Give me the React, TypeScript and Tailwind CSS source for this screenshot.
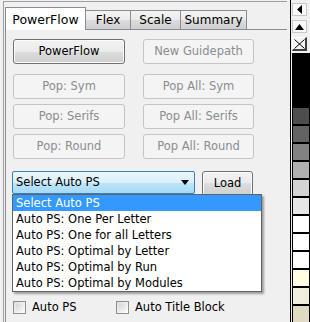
import React from "react";

const swatches = [
  "#4d4d4d",
  "#636363",
  "#828282",
  "#b0b0b0",
  "#d4d4d4",
  "#e6e6e6",
  "#ffffff",
  "#ffffff",
  "#ffffff",
  "#fffee2",
  "#f0eedc",
  "#e0dac2",
];

const items = [
  "Select Auto PS",
  "Auto PS: One Per Letter",
  "Auto PS: One for all Letters",
  "Auto PS: Optimal by Letter",
  "Auto PS: Optimal by Run",
  "Auto PS: Optimal by Modules",
];

const WinButton = ({
  label,
  disabled,
  className = "",
}: {
  label: string;
  disabled?: boolean;
  className?: string;
}) => {
  if (disabled) {
    return (
      <div
        className={`h-[25px] flex items-center justify-center rounded-[3px] border border-[#c2c5c8] bg-[#f4f4f4] text-[#8a8d92] ${className}`}
      >
        {label}
      </div>
    );
  }
  return (
    <div
      className={`h-[25px] flex items-center justify-center rounded-[3px] border border-[#707070] bg-[linear-gradient(#f2f2f2,#ebebeb_50%,#dddddd_50%,#cfcfcf)] shadow-[inset_0_0_0_1px_#fcfcfc] text-black ${className}`}
    >
      {label}
    </div>
  );
};

const Tab = ({
  label,
  active,
  className = "",
}: {
  label: string;
  active?: boolean;
  className?: string;
}) =>
  active ? (
    <div
      className={`h-[23px] pt-[2px] border border-b-0 border-[#898c95] bg-white text-[12.5px] text-black text-center -mb-px relative z-10 leading-[20px] ${className}`}
    >
      {label}
    </div>
  ) : (
    <div
      className={`h-[19px] border border-b-0 border-l-0 border-[#898c95] bg-[linear-gradient(#f3f3f3,#ebebeb_50%,#dddddd_50%,#cfcfcf)] text-[12px] text-black text-center leading-[18px] ${className}`}
    >
      {label}
    </div>
  );

const Checkbox = ({ label }: { label: string }) => (
  <div className="flex items-center gap-[6px]">
    <div className="w-[13px] h-[13px] border border-[#8e8f8f] bg-[linear-gradient(135deg,#dcdcdc,#ffffff)] p-[2px]">
      <div className="w-full h-full bg-[linear-gradient(135deg,#d8d8d8,#f4f4f4)]" />
    </div>
    <span>{label}</span>
  </div>
);

export default function App() {
  return (
    <div className="w-[310px] h-[322px] flex bg-[#f0f0f0] overflow-hidden font-['DejaVu_Sans',sans-serif] text-[11.5px] text-black">
      <div className="w-[290px] pl-[3px] pt-px">
        <div className="w-[284px] h-[321px] border-t border-l border-[#a0a0a0] pl-px pt-[4px] flex flex-col">
          <div className="flex items-end h-[23px]">
            <Tab label="PowerFlow" active className="w-[81px]" />
            <Tab label="Flex" className="w-[45px]" />
            <Tab label="Scale" className="w-[50px]" />
            <Tab label="Summary" className="w-[66px]" />
          </div>
          <div className="flex-1 border-t border-l border-[#898c95] relative pl-[7px] pt-[9px]">
            <div className="grid grid-cols-[112px_111px] gap-x-[18px]">
              <WinButton label="PowerFlow" />
              <WinButton label="New Guidepath" disabled />
            </div>
            <div className="grid grid-cols-[112px_111px] gap-x-[18px] gap-y-[5px] mt-[10px]">
              <WinButton label="Pop: Sym" disabled />
              <WinButton label="Pop All: Sym" disabled />
              <WinButton label="Pop: Serifs" disabled />
              <WinButton label="Pop All: Serifs" disabled />
              <WinButton label="Pop: Round" disabled />
              <WinButton label="Pop All: Round" disabled />
            </div>
            <div className="flex mt-[12px] -ml-px gap-[7px]">
              <div className="w-[183px] h-[23px] rounded-[2px] border border-[#3c7fb1] bg-[linear-gradient(#eaf6fd,#d9f0fc_50%,#bee6fd_50%,#a7d9f5)] flex items-center justify-between pl-[3px] pr-[5px]">
                <span>Select Auto PS</span>
                <svg width="8" height="5" viewBox="0 0 8 5">
                  <path d="M0 0h8L4 5z" fill="#000" />
                </svg>
              </div>
              <WinButton label="Load" className="w-[51px] h-[23px]" />
            </div>
            <div className="flex mt-[103px]">
              <div className="w-[103px]">
                <Checkbox label="Auto PS" />
              </div>
              <Checkbox label="Auto Title Block" />
            </div>
            <div className="absolute left-[6px] top-[164px] w-[250px] border border-[#646464] bg-white shadow-[2px_2px_2px_rgba(0,0,0,0.35)]">
              {items.map((it, i) => (
                <div
                  key={it}
                  className={`h-[16px] leading-[16px] pl-[3px] ${
                    i === 0 ? "bg-[#3399ff] text-white" : "text-black"
                  }`}
                >
                  {it}
                </div>
              ))}
            </div>
          </div>
        </div>
      </div>
      <div className="w-px bg-black" />
      <div className="w-px bg-[#f0f0f0]" />
      <div className="w-[18px] flex flex-col">
        <div className="h-[56px] flex flex-col pt-[3px] gap-[4px] pr-[3px]">
          <div className="h-[13px] border border-[#c8c8c8] bg-[#f8f8f8] flex items-center justify-center">
            <svg width="5" height="9" viewBox="0 0 5 9">
              <path d="M5 0v9L0 4.5z" fill="#000" />
            </svg>
          </div>
          <div className="h-[13px] border border-[#c8c8c8] bg-[#f8f8f8] flex items-center justify-center">
            <svg width="9" height="6" viewBox="0 0 9 6">
              <path d="M0 6h9L4.5 0z" fill="#000" />
            </svg>
          </div>
          <div className="h-[14px] border-t border-l border-white border-r-2 border-b-2 border-r-[#404040] border-b-[#404040] bg-[#f4f4f4] flex items-center justify-center">
            <svg width="11" height="10" viewBox="0 0 11 10">
              <path d="M0.5 0.5l10 9M10.5 0.5l-10 9" stroke="#000" strokeWidth="1" />
            </svg>
          </div>
        </div>
        <div className="flex-1 bg-black pt-[55px] pl-px pr-px flex flex-col gap-[2px]">
          {swatches.map((c, i) => (
            <div key={i} className="h-[16px] shrink-0" style={{ backgroundColor: c }} />
          ))}
        </div>
      </div>
    </div>
  );
}
